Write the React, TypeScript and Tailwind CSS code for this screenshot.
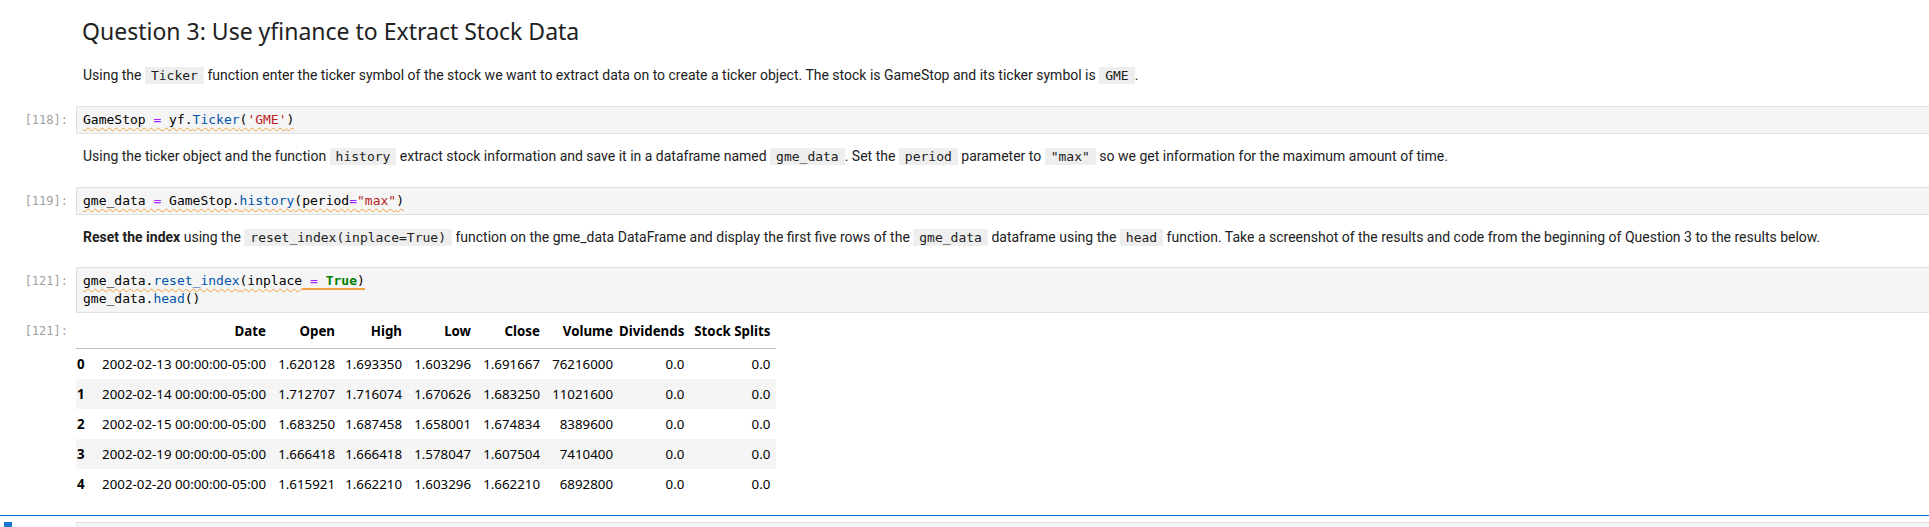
import React from "react";

function Code({ children }: { children: React.ReactNode }) {
    return (
        <code className="bg-[#eeeeee] px-[6px] py-[1px] font-['DejaVu_Sans_Mono',monospace] text-[13px] text-[#212121]">
            {children}
        </code>
    );
}

function CodeCell({ prompt, children }: { prompt: string; children: React.ReactNode }) {
    return (
        <div className="flex">
            <div className="w-[76px] shrink-0 pr-[8px] pt-[5px] text-right font-['DejaVu_Sans_Mono',monospace] text-[12px] leading-[18px] text-[#a0a0a0]">
                {prompt}
            </div>
            <div className="flex-1 border border-r-0 border-[#e0e0e0] bg-[#f5f5f5] px-[6px] py-[4px] font-['DejaVu_Sans_Mono',monospace] text-[13px] leading-[18px] text-[#000000] whitespace-pre">
                {children}
            </div>
        </div>
    );
}

function Markdown({ children }: { children: React.ReactNode }) {
    return (
        <div className="pl-[83px] font-['Roboto',sans-serif] text-[14px] leading-[20px] text-[#212121] whitespace-nowrap">
            {children}
        </div>
    );
}

const rows = [
    ["0", "2002-02-13 00:00:00-05:00", "1.620128", "1.693350", "1.603296", "1.691667", "76216000", "0.0", "0.0"],
    ["1", "2002-02-14 00:00:00-05:00", "1.712707", "1.716074", "1.670626", "1.683250", "11021600", "0.0", "0.0"],
    ["2", "2002-02-15 00:00:00-05:00", "1.683250", "1.687458", "1.658001", "1.674834", "8389600", "0.0", "0.0"],
    ["3", "2002-02-19 00:00:00-05:00", "1.666418", "1.666418", "1.578047", "1.607504", "7410400", "0.0", "0.0"],
    ["4", "2002-02-20 00:00:00-05:00", "1.615921", "1.662210", "1.603296", "1.662210", "6892800", "0.0", "0.0"],
];

const headers = ["", "Date", "Open", "High", "Low", "Close", "Volume", "Dividends", "Stock Splits"];
const colWidths = ["w-[21px]", "w-[175px]", "w-[69px]", "w-[67px]", "w-[69px]", "w-[69px]", "w-[73px]", "w-[71px]", "w-[86px]"];

export default function App() {
    const squiggle = "underline decoration-wavy decoration-[#f0a040] decoration-1 underline-offset-[3px]";

    return (
        <div className="w-[1929px] h-[527px] overflow-hidden bg-white">
            {/* heading */}
            <div className="pl-[82px] pt-[17px]">
                <h3 className="font-['Noto_Sans',sans-serif] text-[23px] leading-[28px] font-normal text-[#212121]">
                    Question 3: Use yfinance to Extract Stock Data
                </h3>
            </div>

            <div className="mt-[20px]">
                <Markdown>
                    Using the <Code>Ticker</Code> function enter the ticker symbol of the stock we want to extract data on to create a ticker object. The stock is GameStop and its ticker symbol is <Code>GME</Code>.
                </Markdown>
            </div>

            <div className="mt-[20px]">
                <CodeCell prompt="[118]:">
                    <span className={squiggle}>
                        GameStop <span className="text-[#aa22ff]">=</span> yf.<span className="text-[#0055aa]">Ticker</span>(<span className="text-[#ba2121]">'GME'</span>)
                    </span>
                </CodeCell>
            </div>

            <div className="mt-[12px]">
                <Markdown>
                    Using the ticker object and the function <Code>history</Code> extract stock information and save it in a dataframe named <Code>gme_data</Code>. Set the <Code>period</Code> parameter to <Code>"max"</Code> so we get information for the maximum amount of time.
                </Markdown>
            </div>

            <div className="mt-[20px]">
                <CodeCell prompt="[119]:">
                    <span className={squiggle}>
                        gme_data <span className="text-[#aa22ff]">=</span> GameStop.<span className="text-[#0055aa]">history</span>(period<span className="text-[#aa22ff]">=</span><span className="text-[#ba2121]">"max"</span>)
                    </span>
                </CodeCell>
            </div>

            <div className="mt-[12px]">
                <Markdown>
                    <b className="font-bold">Reset the index</b> using the <Code>reset_index(inplace=True)</Code> function on the gme_data DataFrame and display the first five rows of the <Code>gme_data</Code> dataframe using the <Code>head</Code> function. Take a screenshot of the results and code from the beginning of Question 3 to the results below.
                </Markdown>
            </div>

            <div className="mt-[19px]">
                <CodeCell prompt="[121]:">
                    <div>
                        <span className={squiggle}>
                            gme_data.<span className="text-[#0055aa]">reset_index</span>(inplace
                        </span>
                        <span className="underline decoration-solid decoration-2 decoration-[#f0a040] underline-offset-[3px]">
                            {" "}<span className="text-[#aa22ff]">=</span> <span className="font-bold text-[#008000]">True</span>)
                        </span>
                    </div>
                    <div>
                        gme_data.<span className="text-[#0055aa]">head</span>()
                    </div>
                </CodeCell>
            </div>

            {/* output */}
            <div className="mt-[3px] flex">
                <div className="w-[76px] shrink-0 pr-[8px] pt-[6px] text-right font-['DejaVu_Sans_Mono',monospace] text-[12px] leading-[18px] text-[#a0a0a0]">
                    [121]:
                </div>
                <table className="table-fixed border-collapse font-['Noto_Sans',sans-serif] text-[13.3px] leading-[18px] text-[#000000]">
                    <colgroup>
                        {colWidths.map((w, i) => (
                            <col key={i} className={w} />
                        ))}
                    </colgroup>
                    <thead>
                        <tr className="border-b border-[#bdbdbd]">
                            {headers.map((h, i) => (
                                <th key={i} className="pt-[6px] pb-[8px] pr-[6px] text-right font-bold whitespace-nowrap">
                                    {h}
                                </th>
                            ))}
                        </tr>
                    </thead>
                    <tbody>
                        {rows.map((r, ri) => (
                            <tr key={ri} className={ri % 2 === 1 ? "bg-[#f5f5f5]" : "bg-white"}>
                                {r.map((c, ci) => (
                                    <td
                                        key={ci}
                                        className={
                                            ci === 0
                                                ? "py-[6px] pl-[1px] text-left font-bold"
                                                : "py-[6px] pr-[6px] text-right whitespace-nowrap"
                                        }
                                    >
                                        {c}
                                    </td>
                                ))}
                            </tr>
                        ))}
                    </tbody>
                </table>
            </div>

            {/* active cell below */}
            <div className="mt-[16px] h-px bg-[#1976d2]" />
            <div className="mt-[6px] flex">
                <div className="w-[76px] shrink-0 pl-[4px]">
                    <div className="h-[20px] w-[8px] bg-[#1976d2]" />
                </div>
                <div className="h-[30px] flex-1 border border-r-0 border-[#e0e0e0] bg-[#f5f5f5]" />
            </div>
        </div>
    );
}
